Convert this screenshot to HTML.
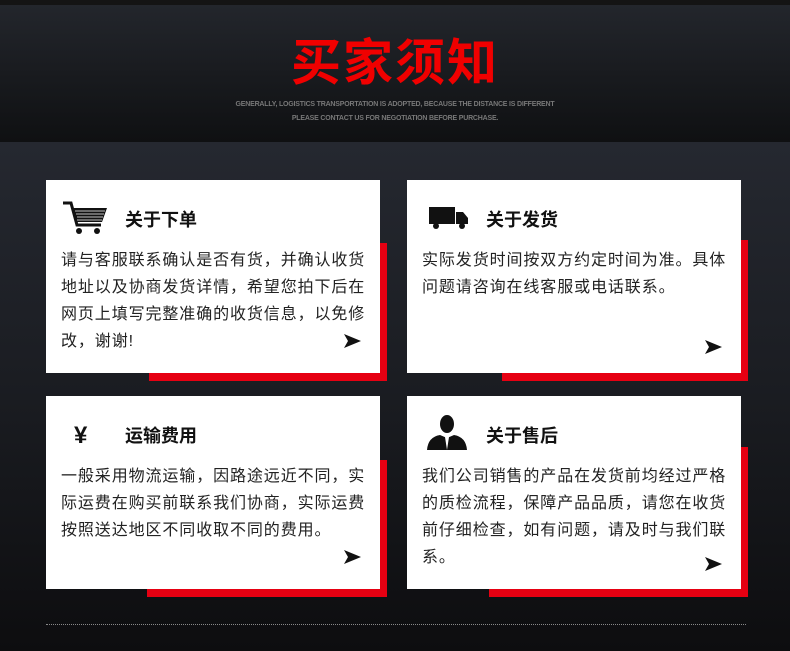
<!DOCTYPE html><html><head><meta charset="utf-8"><style>
*{margin:0;padding:0;box-sizing:border-box}
body{width:790px;height:651px;overflow:hidden;background:linear-gradient(#252830 142px,#1a1c21 400px,#0d0d0f 651px);font-family:"Liberation Sans","Noto Sans CJK SC",sans-serif;position:relative}
.top{position:absolute;left:0;top:0;width:790px;height:5px;background:#141414}
.hd{position:absolute;left:0;top:5px;width:790px;height:137px;background:linear-gradient(#23262c,#0f1012)}
.t{position:absolute;left:0;width:790px;text-align:center;top:33px;font-size:50px;font-weight:bold;color:#f00000;letter-spacing:2px;line-height:60px}
.s{position:absolute;left:0;width:790px;text-align:center;font-size:7px;color:#777;letter-spacing:-0.2px;font-weight:bold}
.red{position:absolute;background:#e60012}
.card{position:absolute;background:#fff;width:334px;height:193px}
.card h3{position:absolute;left:79px;top:26px;font-size:18px;font-weight:bold;color:#111}
.card p{position:absolute;left:15px;top:67px;width:308px;font-size:16px;letter-spacing:0.9px;line-height:27px;color:#222}
.ar{position:absolute;right:19px;bottom:25px}
.ic{position:absolute;left:17px;top:20px}
.dot{position:absolute;left:46px;top:624px;width:700px;border-top:1px dotted #888}
</style></head><body>
<div class="top"></div><div class="hd"></div>
<div class="t">买家须知</div>
<div class="s" style="top:101px">GENERALLY, LOGISTICS TRANSPORTATION IS ADOPTED, BECAUSE THE DISTANCE IS DIFFERENT</div>
<div class="s" style="top:115px">PLEASE CONTACT US FOR NEGOTIATION BEFORE PURCHASE.</div>

<div class="red" style="left:149px;top:243px;width:238px;height:138px"></div>
<div class="red" style="left:502px;top:240px;width:246px;height:141px"></div>
<div class="red" style="left:147px;top:460px;width:240px;height:137px"></div>
<div class="red" style="left:489px;top:447px;width:259px;height:150px"></div>

<div class="card" style="left:46px;top:180px">
<svg class="ic" width="46" height="36" viewBox="0 0 46 36"><path d="M0 3 L8 3 L14 25 L38 25" stroke="#111" stroke-width="3" fill="none"/><path d="M9 8 L44 8 L39 22 L13 22 Z" fill="#111"/><g stroke="#fff" stroke-width="0.8"><path d="M12 11H42M13 14H41M14 17H40M14 20H39"/></g><circle cx="16" cy="31" r="3" fill="#111"/><circle cx="34" cy="31" r="3" fill="#111"/></svg>
<h3>关于下单</h3>
<p>请与客服联系确认是否有货，并确认收货地址以及协商发货详情，希望您拍下后在网页上填写完整准确的收货信息，以免修改，谢谢!</p>
<svg class="ar" width="17" height="14" viewBox="0 0 17 14"><path d="M0 0L17 7L0 14L4 7Z" fill="#111"/></svg>
</div>

<div class="card" style="left:407px;top:180px">
<svg class="ic" style="left:22px;top:27px" width="40" height="22" viewBox="0 0 40 22"><rect x="0" y="0" width="26" height="17" fill="#111"/><path d="M27 5H34L39 11V17H27Z" fill="#111"/><circle cx="7" cy="19" r="3" fill="#111"/><circle cx="33" cy="19" r="3" fill="#111"/></svg>
<h3>关于发货</h3>
<p>实际发货时间按双方约定时间为准。具体问题请咨询在线客服或电话联系。</p>
<svg class="ar" style="bottom:19px" width="17" height="14" viewBox="0 0 17 14"><path d="M0 0L17 7L0 14L4 7Z" fill="#111"/></svg>
</div>

<div class="card" style="left:46px;top:396px">
<div style="position:absolute;left:28px;top:26px;font-size:24px;font-weight:bold;color:#111">¥</div>
<h3>运输费用</h3>
<p>一般采用物流运输，因路途远近不同，实际运费在购买前联系我们协商，实际运费按照送达地区不同收取不同的费用。</p>
<svg class="ar" width="17" height="14" viewBox="0 0 17 14"><path d="M0 0L17 7L0 14L4 7Z" fill="#111"/></svg>
</div>

<div class="card" style="left:407px;top:396px">
<svg class="ic" style="left:20px;top:18px" width="40" height="36" viewBox="0 0 40 36"><ellipse cx="20" cy="10" rx="7" ry="9" fill="#111"/><path d="M0 36 Q1 23 13 21 L20 24 L27 21 Q39 23 40 36Z" fill="#111"/><path d="M18 23L20 36L22 23Z" fill="#fff"/></svg>
<h3>关于售后</h3>
<p>我们公司销售的产品在发货前均经过严格的质检流程，保障产品品质，请您在收货前仔细检查，如有问题，请及时与我们联系。</p>
<svg class="ar" style="bottom:18px" width="17" height="14" viewBox="0 0 17 14"><path d="M0 0L17 7L0 14L4 7Z" fill="#111"/></svg>
</div>
<div class="dot"></div>
</body></html>
